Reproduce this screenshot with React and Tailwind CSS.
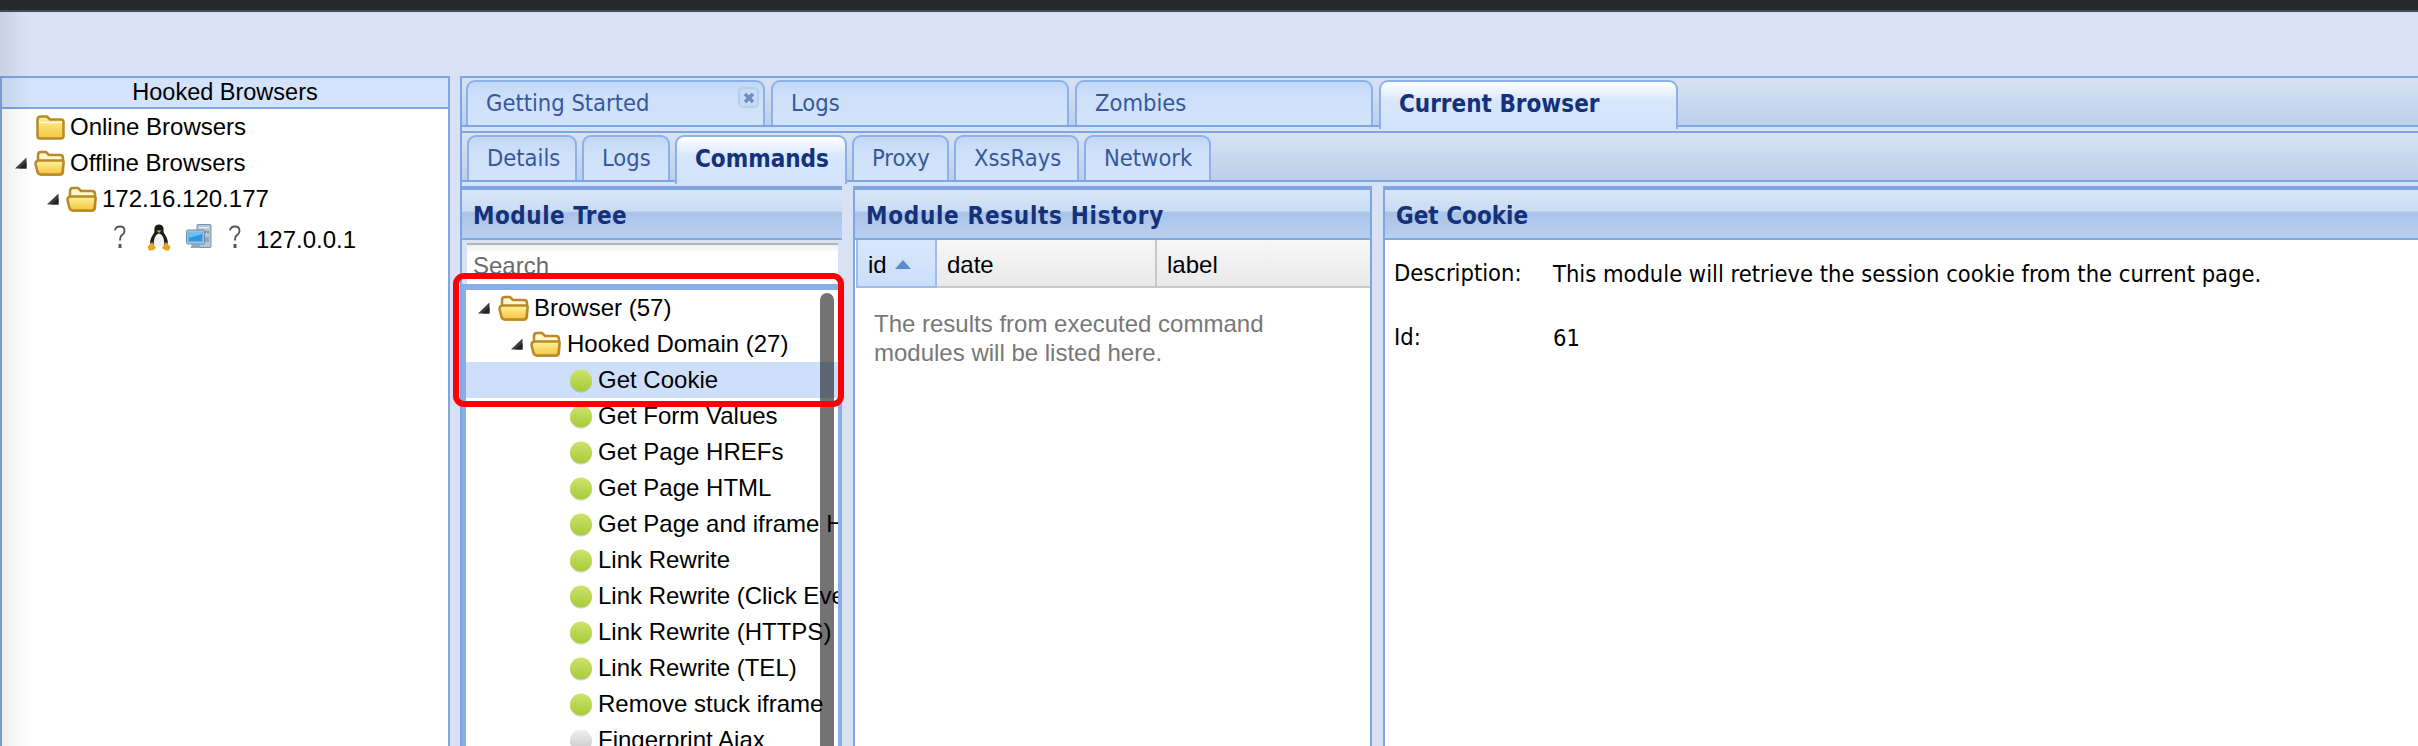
import React from "react";

const greenModules = [
  "Get Form Values",
  "Get Page HREFs",
  "Get Page HTML",
  "Get Page and iframe HTML",
  "Link Rewrite",
  "Link Rewrite (Click Events)",
  "Link Rewrite (HTTPS)",
  "Link Rewrite (TEL)",
  "Remove stuck iframe",
];

const mainTabs = [
  { label: "Getting Started", w: "w-[299px]", closable: true },
  { label: "Logs", w: "w-[298px]" },
  { label: "Zombies", w: "w-[298px]" },
  { label: "Current Browser", w: "w-[299px]", active: true },
];

const subTabs = [
  { label: "Details", w: "w-[110px]" },
  { label: "Logs", w: "w-[88px]" },
  { label: "Commands", w: "w-[172px]", active: true },
  { label: "Proxy", w: "w-[97px]" },
  { label: "XssRays", w: "w-[125px]" },
  { label: "Network", w: "w-[127px]" },
];

const Arrow = () => (
  <svg width="13" height="12" viewBox="0 0 13 12" className="shrink-0">
    <path d="M12.5 0.5V11.5H1Z" fill="#3d3d3d" />
    <path d="M12.5 5V11.5H5Z" fill="#222" />
  </svg>
);

const ClosedFolder = () => (
  <svg width="29" height="25" viewBox="0 0 29 25" className="shrink-0">
    <defs>
      <linearGradient id="fc" x1="0" y1="0" x2="0" y2="1">
        <stop offset="0" stopColor="#fff09a" />
        <stop offset="1" stopColor="#f5c63c" />
      </linearGradient>
    </defs>
    <path d="M1.500 5Q1.500 1.500 4.500 1.500H11L14 4.500H25Q27.500 4.500 27.500 7V21Q27.500 23.500 25 23.500H4Q1.500 23.500 1.500 21Z" fill="url(#fc)" stroke="#b98a2a" strokeWidth="2.500" />
    <path d="M3 7.500H26" stroke="#fffbe0" strokeWidth="1.500" />
  </svg>
);

const OpenFolder = () => (
  <svg width="31" height="26" viewBox="0 0 31 26" className="shrink-0">
    <defs>
      <linearGradient id="fo" x1="0" y1="0" x2="0" y2="1">
        <stop offset="0" stopColor="#fff29e" />
        <stop offset="1" stopColor="#f5c63c" />
      </linearGradient>
    </defs>
    <path d="M4 12V5Q4 2 7 2H12L15 5H26Q29 5 29 8V21Q29 24.500 26 24.500H8Q5 24.500 4 21Z" fill="#fff7d0" stroke="#b98a2a" strokeWidth="2.500" />
    <path d="M1.500 14Q1.500 10.500 5 10.500H28Q30 10.500 29.500 13L28.500 22Q28 24.500 25.500 24.500H7Q4.500 24.500 3.500 22Z" fill="url(#fo)" stroke="#b98a2a" strokeWidth="2.500" />
  </svg>
);

const Ball = ({ gray }) => {
  const id = gray ? "ballGray" : "ballGreen";
  return (
    <svg width="24" height="24" viewBox="0 0 24 24" className="shrink-0 translate-y-[1px]">
      <defs>
        <linearGradient id={id} x1="0" y1="0" x2="0" y2="1">
          <stop offset="0" stopColor={gray ? "#efefef" : "#cde46c"} />
          <stop offset="1" stopColor={gray ? "#c8c8c8" : "#a6cb38"} />
        </linearGradient>
      </defs>
      <circle cx="12" cy="12.800" r="11" fill="#000" opacity="0.12" />
      <circle cx="12" cy="11.500" r="11" fill={`url(#${id})`} />
    </svg>
  );
};

const Question = () => (
  <svg width="16" height="26" viewBox="0 0 16 26" className="shrink-0">
    <path d="M3 6.500Q3.500 2.500 8 2.500Q12.500 2.500 12.500 6.500Q12.500 9.500 10 11Q8 12.500 8 16.500" fill="none" stroke="#555" strokeWidth="1.800" />
    <rect x="6.500" y="20" width="3" height="4" fill="#555" />
  </svg>
);

const Tux = () => (
  <svg width="24" height="27" viewBox="0 0 24 27" className="shrink-0">
    <path d="M12 0.500C7.500 0.500 7 4.500 7.500 8C6 11 2 15 3.500 22H20.500C22 15 18 11 16.500 8C17 4.500 16.500 0.500 12 0.500Z" fill="#1a1a1a" />
    <path d="M12 9.500C8 10.500 6 16 7 22H17C18 16 16 10.500 12 9.500Z" fill="#f2f2f2" />
    <path d="M9.500 6.500H14.500L12 9Z" fill="#e8a91c" />
    <path d="M0.500 23L5 18L9 24L5.500 26.500H2Z" fill="#eaa51c" />
    <path d="M23.500 23L19 18L15 24L18.500 26.500H22Z" fill="#eaa51c" />
  </svg>
);

const Computer = () => (
  <svg width="26" height="26" viewBox="0 0 26 26" className="shrink-0">
    <rect x="11" y="0.500" width="14" height="23" rx="1" fill="#b6c5d6" stroke="#7c92aa" />
    <rect x="18" y="7" width="2" height="2" fill="#d04a3a" />
    <rect x="21" y="7" width="2" height="2" fill="#55b05a" />
    <rect x="13" y="3" width="10" height="1.500" fill="#e3eaf2" />
    <rect x="18" y="13" width="5" height="5" fill="#93a6ba" />
    <rect x="0.500" y="6" width="18" height="14" rx="1.500" fill="#a9c0d8" stroke="#6f8ba8" />
    <rect x="2.500" y="8" width="14" height="9.500" fill="#2f96e6" />
    <path d="M2.500 14L16.500 10V8H2.500Z" fill="#6cc0f2" />
    <path d="M6 20H13L14.500 24H4.500Z" fill="#8ea6be" />
  </svg>
);

const Tab = ({ label, w, active, closable }) => (
  <div
    className={`relative flex items-center pl-[18px] rounded-t-[9px] border-2 border-b-0 border-[#8cb0e8] ${w} ${
      active
        ? "h-[49px] -mb-[4px] z-10 pb-[4px] bg-gradient-to-b from-white via-[#d8e7fc] via-40% to-[#d2e3fb] text-[24px] font-bold text-[#15317a]"
        : "h-[45px] bg-gradient-to-b from-[#c3d8f6] via-[#cfe1fa] via-40% to-[#d2e3fb] text-[23.500px] text-[#36589a]"
    }`}
  >
    {label}
    {closable && (
      <span className="absolute right-[4px] top-[5px] flex h-[21px] w-[21px] items-center justify-center rounded-[5px] border-2 border-[#b7cdee] bg-[#c9dcf7]">
        <svg width="12" height="12" viewBox="0 0 12 12">
          <path d="M2 2L10 10M10 2L2 10" stroke="#6f8dbb" strokeWidth="3.500" />
        </svg>
      </span>
    )}
  </div>
);

const PanelHeader = ({ children, className = "" }) => (
  <div className={`flex h-[50px] shrink-0 items-center border-b-2 border-[#84a8e0] bg-[linear-gradient(to_bottom,#d9e6f8_0%,#c9dcf5_44%,#a9c3e9_46%,#b9cfee_100%)] pl-[11px] pt-[3px] text-[24px] font-bold text-[#15317a] ${className}`}>
    {children}
  </div>
);

const TreeRow = ({ children, className = "" }) => (
  <div className={`flex h-[36px] items-center whitespace-nowrap ${className}`}>{children}</div>
);

const Leaf = ({ label, selected, gray }) => (
  <TreeRow className={`pl-[103px] ${selected ? "bg-[#cddffa]" : ""}`}>
    <Ball gray={gray} />
    <span className="ml-[5px]">{label}</span>
  </TreeRow>
);

export default function App() {
  return (
    <div className="relative flex h-[746px] w-[2418px] flex-col overflow-hidden bg-[#d8e2f4] font-['Liberation_Sans',sans-serif] text-[24px] text-black">
      <div className="h-[12px] shrink-0 border-b-2 border-[#4a4b50] bg-[#27282c]" />

      <div className="relative flex min-h-0 flex-1 gap-[10px] pt-[64px]">
        <div className="pointer-events-none absolute inset-y-0 left-0 z-20 w-[30px] bg-gradient-to-r from-black/[0.07] to-transparent" />

        {/* Hooked browsers */}
        <div className="flex w-[450px] shrink-0 flex-col border-x-2 border-t-2 border-[#7fa6e0] bg-white">
          <div className="flex h-[31px] shrink-0 items-center justify-center border-b-2 border-[#7fa6e0] bg-[#d2e3fb] text-[23.500px]">
            Hooked Browsers
          </div>
          <div>
            <TreeRow className="pl-[34px]">
              <ClosedFolder />
              <span className="ml-[5px]">Online Browsers</span>
            </TreeRow>
            <TreeRow className="pl-[12px]">
              <Arrow />
              <span className="ml-[7px] flex"><OpenFolder /></span>
              <span className="ml-[5px]">Offline Browsers</span>
            </TreeRow>
            <TreeRow className="pl-[44px]">
              <Arrow />
              <span className="ml-[7px] flex"><OpenFolder /></span>
              <span className="ml-[5px]">172.16.120.177</span>
            </TreeRow>
            <div className="mt-[2px] flex h-[36px] items-center pl-[110px]">
              <Question />
              <span className="ml-[19px] flex"><Tux /></span>
              <span className="ml-[15px] flex"><Computer /></span>
              <span className="ml-[15px] flex"><Question /></span>
              <span className="ml-[13px] mt-[5px]">127.0.0.1</span>
            </div>
          </div>
        </div>

        {/* Main area */}
        <div className="flex min-w-0 flex-1 flex-col border-l-2 border-t-2 border-[#7fa6e0] font-['DejaVu_Sans_Condensed','Noto_Sans',sans-serif]">
          <div className="flex h-[47px] shrink-0 items-end gap-[6px] bg-gradient-to-b from-[#d8e2f4] to-[#bdcfea] pl-[4px]">
            {mainTabs.map((t) => (
              <Tab key={t.label} {...t} />
            ))}
          </div>
          <div className="h-[8px] shrink-0 border-y-2 border-[#7fa6e0] bg-[#d2e3fb]" />
          <div className="flex h-[47px] shrink-0 items-end gap-[5px] bg-gradient-to-b from-[#d8e2f4] to-[#bdcfea] pl-[5px]">
            {subTabs.map((t) => (
              <Tab key={t.label} {...t} />
            ))}
          </div>
          <div className="h-[6px] shrink-0 border-t-2 border-[#7fa6e0] bg-[#d2e3fb]" />

          <div className="flex min-h-0 flex-1">
            {/* Module tree */}
            <div className="flex w-[380px] shrink-0 flex-col border-t-4 border-[#7fa6e0] bg-[#d8e2f4]">
              <PanelHeader className="tracking-[0.5px]">Module Tree</PanelHeader>
              <div className="h-[44px] shrink-0 pl-[5px] pr-[4px] pt-[3px]">
                <div className="h-[41px] overflow-hidden border-t-2 border-[#b5b5b5] bg-gradient-to-b from-[#eeeeee] to-white to-20% pl-[6px] pt-[7px] font-['Liberation_Sans',sans-serif] leading-[28px] text-[#6b6b6b]">
                  Search
                </div>
              </div>
              <div className="relative min-h-0 flex-1 overflow-hidden border-x-4 border-t-[6px] border-[#8aaee6] bg-white font-['Liberation_Sans',sans-serif]">
                <TreeRow className="pl-[11px]">
                  <Arrow />
                  <span className="ml-[8px] flex"><OpenFolder /></span>
                  <span className="ml-[5px]">Browser (57)</span>
                </TreeRow>
                <TreeRow className="pl-[44px]">
                  <Arrow />
                  <span className="ml-[7px] flex"><OpenFolder /></span>
                  <span className="ml-[6px]">Hooked Domain (27)</span>
                </TreeRow>
                <Leaf label="Get Cookie" selected />
                {greenModules.map((m) => (
                  <Leaf key={m} label={m} />
                ))}
                <Leaf label="Fingerprint Ajax" gray />
                <div className="absolute bottom-0 right-[4px] top-[3px] w-[14px] rounded-t-[7px] bg-black/55" />
              </div>
            </div>
            <div className="w-[11px] shrink-0 bg-[#d8e2f4]" />

            {/* Results history */}
            <div className="flex w-[519px] shrink-0 flex-col border-x-2 border-t-4 border-[#7fa6e0] bg-white">
              <PanelHeader className="tracking-[0.7px]">Module Results History</PanelHeader>
              <div className="flex h-[48px] shrink-0 pl-[1px] pt-0 font-['Liberation_Sans',sans-serif]">
                <div className="flex w-[81px] items-center gap-[8px] border-x-2 border-b-2 border-[#9dbcec] bg-gradient-to-b from-[#d8e7fc] to-[#cbdef9] pl-[10px] pt-[3px]">
                  id
                  <svg width="16" height="9" viewBox="0 0 16 9">
                    <path d="M8 0L16 9H0Z" fill="#5b8ad0" />
                  </svg>
                </div>
                <div className="flex w-[220px] items-center border-b-2 border-r-2 border-[#c8c8c8] bg-gradient-to-b from-[#f7f7f7] to-[#e9e9e9] pl-[10px] pt-[3px]">
                  date
                </div>
                <div className="flex flex-1 items-center border-b-2 border-[#c8c8c8] bg-gradient-to-b from-[#f7f7f7] to-[#e9e9e9] pl-[10px] pt-[3px]">
                  label
                </div>
              </div>
              <div className="pl-[19px] pt-[21px] font-['Liberation_Sans',sans-serif] leading-[29px] text-[#777777]">
                The results from executed command
                <br />
                modules will be listed here.
              </div>
            </div>
            <div className="w-[11px] shrink-0 bg-[#d8e2f4]" />

            {/* Module details */}
            <div className="flex min-w-0 flex-1 flex-col border-l-2 border-t-4 border-[#7fa6e0] bg-white">
              <PanelHeader>Get Cookie</PanelHeader>
              <div className="grid grid-cols-[159px_1fr] gap-y-[33px] pl-[9px] pt-[18px] text-[23.500px] leading-[30px]">
                <span>Description:</span>
                <span className="mt-[1px]">This module will retrieve the session cookie from the current page.</span>
                <span>Id:</span>
                <span className="mt-[1px]">61</span>
              </div>
            </div>
          </div>
        </div>
      </div>

      {/* Red annotation */}
      <div className="pointer-events-none absolute left-[453px] top-[273px] z-30 h-[134px] w-[391px] rounded-[11px] border-[6px] border-[#fb0007]" />
    </div>
  );
}
